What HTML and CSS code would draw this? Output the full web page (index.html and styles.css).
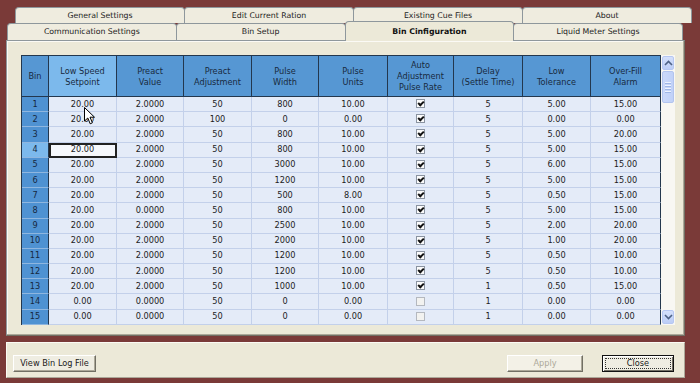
FILE: index.html
```html
<!DOCTYPE html>
<html>
<head>
<meta charset="utf-8">
<title>Bin Configuration</title>
<link rel="stylesheet" href="styles.css">
</head>
<body>
<div class="dialog">
  <div class="tabs">
    <div class="tabrow back">
      <div class="tab">General Settings</div>
      <div class="tab">Edit Current Ration</div>
      <div class="tab">Existing Cue Files</div>
      <div class="tab">About</div>
    </div>
    <div class="tabrow front">
      <div class="tab">Communication Settings</div>
      <div class="tab">Bin Setup</div>
      <div class="tab sel">Bin Cinfiguration</div>
      <div class="tab">Liquid Meter Settings</div>
    </div>
  </div>
  <div class="page">
    <div class="gridwrap">
      <table class="grid">
        <colgroup>
          <col class="c-bin"><col class="c68"><col class="c67"><col class="c68"><col class="c67"><col class="c69"><col class="c66"><col class="c69"><col class="c68"><col class="c70">
        </colgroup>
        <thead>
          <tr>
            <th>Bin</th>
            <th class="hsel">Low Speed<br>Setpoint</th>
            <th>Preact<br>Value</th>
            <th>Preact<br>Adjustment</th>
            <th>Pulse<br>Width</th>
            <th>Pulse<br>Units</th>
            <th>Auto<br>Adjustment<br>Pulse Rate</th>
            <th>Delay<br>(Settle Time)</th>
            <th>Low<br>Tolerance</th>
            <th>Over-Fill<br>Alarm</th>
          </tr>
        </thead>
        <tbody>
          <tr><td class="bin">1</td><td>20.00</td><td>2.0000</td><td>50</td><td>800</td><td>10.00</td><td><span class="cb on"></span></td><td>5</td><td>5.00</td><td>15.00</td></tr>
          <tr><td class="bin">2</td><td>20.00</td><td>2.0000</td><td>100</td><td>0</td><td>0.00</td><td><span class="cb on"></span></td><td>5</td><td>0.00</td><td>0.00</td></tr>
          <tr><td class="bin">3</td><td>20.00</td><td>2.0000</td><td>50</td><td>800</td><td>10.00</td><td><span class="cb on"></span></td><td>5</td><td>5.00</td><td>20.00</td></tr>
          <tr><td class="bin cur">4</td><td class="sel">20.00</td><td>2.0000</td><td>50</td><td>800</td><td>10.00</td><td><span class="cb on"></span></td><td>5</td><td>5.00</td><td>15.00</td></tr>
          <tr><td class="bin">5</td><td>20.00</td><td>2.0000</td><td>50</td><td>3000</td><td>10.00</td><td><span class="cb on"></span></td><td>5</td><td>6.00</td><td>15.00</td></tr>
          <tr><td class="bin">6</td><td>20.00</td><td>2.0000</td><td>50</td><td>1200</td><td>10.00</td><td><span class="cb on"></span></td><td>5</td><td>5.00</td><td>15.00</td></tr>
          <tr><td class="bin">7</td><td>20.00</td><td>2.0000</td><td>50</td><td>500</td><td>8.00</td><td><span class="cb on"></span></td><td>5</td><td>0.50</td><td>15.00</td></tr>
          <tr><td class="bin">8</td><td>20.00</td><td>0.0000</td><td>50</td><td>800</td><td>10.00</td><td><span class="cb on"></span></td><td>5</td><td>5.00</td><td>15.00</td></tr>
          <tr><td class="bin">9</td><td>20.00</td><td>2.0000</td><td>50</td><td>2500</td><td>10.00</td><td><span class="cb on"></span></td><td>5</td><td>2.00</td><td>20.00</td></tr>
          <tr><td class="bin">10</td><td>20.00</td><td>2.0000</td><td>50</td><td>2000</td><td>10.00</td><td><span class="cb on"></span></td><td>5</td><td>1.00</td><td>20.00</td></tr>
          <tr><td class="bin">11</td><td>20.00</td><td>2.0000</td><td>50</td><td>1200</td><td>10.00</td><td><span class="cb on"></span></td><td>5</td><td>0.50</td><td>10.00</td></tr>
          <tr><td class="bin">12</td><td>20.00</td><td>2.0000</td><td>50</td><td>1200</td><td>10.00</td><td><span class="cb on"></span></td><td>5</td><td>0.50</td><td>10.00</td></tr>
          <tr><td class="bin">13</td><td>20.00</td><td>2.0000</td><td>50</td><td>1000</td><td>10.00</td><td><span class="cb on"></span></td><td>1</td><td>0.50</td><td>15.00</td></tr>
          <tr><td class="bin">14</td><td>0.00</td><td>0.0000</td><td>50</td><td>0</td><td>0.00</td><td><span class="cb"></span></td><td>1</td><td>0.00</td><td>0.00</td></tr>
          <tr><td class="bin">15</td><td>0.00</td><td>0.0000</td><td>50</td><td>0</td><td>0.00</td><td><span class="cb"></span></td><td>1</td><td>0.00</td><td>0.00</td></tr>
        </tbody>
      </table>
      <div class="vscroll">
        <div class="sbtn">
          <svg width="9" height="6" viewBox="0 0 9 6"><path d="M1 5 L4.5 1.5 L8 5" fill="none" stroke="#4d6185" stroke-width="1.6"/></svg>
        </div>
        <div class="track">
          <div class="thumb"><i></i><i></i><i></i><i></i></div>
        </div>
        <div class="sbtn">
          <svg width="9" height="6" viewBox="0 0 9 6"><path d="M1 1 L4.5 4.5 L8 1" fill="none" stroke="#4d6185" stroke-width="1.6"/></svg>
        </div>
      </div>
      <svg class="cursor" width="12" height="18" viewBox="0 0 12 18"><path d="M0.5 0.5 L0.5 14 L3.8 11 L6.2 16.8 L8.4 15.8 L6 10.2 L10.5 10.2 Z" fill="#fff" stroke="#000" stroke-width="1" stroke-linejoin="round"/></svg>
    </div>
  </div>
  <div class="footer">
    <button class="btn log">View Bin Log File</button>
    <span class="spacer"></span>
    <button class="btn apply" disabled>Apply</button>
    <button class="btn close"><span class="focus">Close</span></button>
  </div>
</div>
</body>
</html>
```
FILE: styles.css
```css
* { box-sizing: border-box; }
html, body { margin: 0; padding: 0; }
body {
  width: 700px;
  height: 383px;
  overflow: hidden;
  background: #7a3a38;
  font-family: "DejaVu Sans", Verdana, sans-serif;
  font-size: 8.2px;
  color: #1a1a1a;
}
.dialog { padding: 7px 0 0 6px; }

/* tabs */
.tabs { height: 33px; font-size: 7.8px; }
.tabrow { display: flex; }
.tabrow.back { margin-left: 9px; width: 677px; height: 16px; }
.tabrow.front { margin-left: 1px; width: 676px; height: 17px; }
.tab {
  flex: 1;
  background: #efecdf;
  border: 1px solid #8e979c;
  border-bottom: none;
  border-radius: 4px 4px 0 0;
  text-align: center;
  color: #222;
  margin-left: -1px;
}
.tab:first-child { margin-left: 0; }
.back .tab { line-height: 15px; }
.front .tab { line-height: 16px; }
.tab.sel {
  position: relative;
  z-index: 2;
  margin-top: -2px;
  height: 20px;
  line-height: 19px;
  background: #ece9d8;
  font-weight: bold;
  color: #111;
}

/* page */
.page {
  width: 679px;
  height: 296px;
  background: #ece9d8;
  border: 1px solid #8f989c;
  border-right-color: #716f64;
  border-bottom-color: #716f64;
  box-shadow: inset -1px -1px 0 #aca899, inset 1px 1px 0 #fbfaf5;
  padding: 14px 0 0 14px;
}
.gridwrap {
  position: relative;
  display: flex;
  width: 654px;
  height: 270px;
}
.grid {
  table-layout: fixed;
  border-collapse: separate;
  border-spacing: 0;
  width: 639px;
  border-top: 1px solid #23374e;
  border-left: 1px solid #23374e;
  background: #e4ebf8;
}
.c-bin { width: 27px; }
.c66 { width: 66px; }
.c67 { width: 67px; }
.c68 { width: 68px; }
.c69 { width: 69px; }
.c70 { width: 70px; }
.grid thead tr { height: 41px; }
.grid tbody tr { height: 15.2px; }
.grid th {
  background: #5697d3;
  font-weight: normal;
  color: #182a40;
  line-height: 10.8px;
  padding: 1px 0 0;
  border-right: 1px solid #23374e;
  border-bottom: 1px solid #23374e;
  vertical-align: middle;
  text-align: center;
}
.grid th.hsel { background: #7cb9ec; }
.grid td {
  padding: 0;
  text-align: center;
  vertical-align: middle;
  line-height: 13px;
  border-right: 1px solid #c3d0ea;
  border-bottom: 1px solid #c3d0ea;
  color: #1c1c1c;
}
.grid td:last-child { border-right-color: #23374e; }
.grid td.bin {
  background: #4f92d2;
  color: #16283e;
  border-right: 1px solid #23374e;
  border-bottom: 1px solid #8fb6df;
}
.grid td.bin.cur { background: #7cb9ec; }
.grid td.sel {
  background: #f6f8fc;
  outline: 2px solid #222;
  outline-offset: -2px;
}
.cb {
  display: inline-block;
  position: relative;
  width: 9px;
  height: 9px;
  border: 1px solid #8a93a0;
  background: #fbfbfb;
  vertical-align: middle;
  margin-top: -1px;
}
.cb.on::after {
  content: "";
  position: absolute;
  left: 2px;
  top: 0px;
  width: 2px;
  height: 4px;
  border-right: 2px solid #111;
  border-bottom: 2px solid #111;
  transform: rotate(45deg);
}
.cb:not(.on) { border-color: #b4b8bf; background: #f2f2f0; }

/* scrollbar */
.vscroll {
  width: 15px;
  display: flex;
  flex-direction: column;
  background: #f8f7f3;
  padding: 1px;
}
.sbtn {
  height: 14px;
  border: 1px solid #b6c7f2;
  border-radius: 2px;
  background: linear-gradient(#d4e0fb, #bccdf6);
  display: flex;
  align-items: center;
  justify-content: center;
}
.track { flex: 1; padding-top: 1px; }
.thumb {
  height: 32px;
  border: 1px solid #b2c4ef;
  border-radius: 2px;
  background: linear-gradient(90deg, #cbd9fa, #c0d1f8);
  display: flex;
  flex-direction: column;
  align-items: center;
  justify-content: center;
  gap: 1px;
}
.thumb i {
  display: block;
  width: 6px;
  height: 1px;
  background: #eef3fe;
  box-shadow: 0 1px 0 #9fb6e6;
  margin-bottom: 1px;
}
.cursor {
  position: absolute;
  left: 63px;
  top: 52px;
}

/* footer */
.footer {
  margin-top: 6px;
  width: 679px;
  height: 36px;
  background: #ece9d8;
  border: 1px solid #fbfaf4;
  border-right-color: #aca899;
  border-bottom-color: #aca899;
  display: flex;
  align-items: flex-start;
  padding: 12px 10px 0 6px;
}
.spacer { flex: 1; }
.btn {
  height: 17px;
  padding: 0;
  margin: 0;
  font-family: "DejaVu Sans", Verdana, sans-serif;
  font-size: 8.2px;
  line-height: 13px;
  color: #1a1a1a;
  background: #efede2;
  border: 1px solid;
  border-color: #fff #716f64 #716f64 #fff;
  box-shadow: inset -1px -1px 0 #aca899;
  border-radius: 0;
}
.btn.log { width: 83px; }
.btn.apply { width: 76px; color: #aca899; margin-right: 19px; background: #f3f1e7; }
.btn.close {
  width: 72px;
  border: 1px solid #111;
  box-shadow: inset 1px 1px 0 #fff, inset -1px -1px 0 #716f64;
  padding: 2px;
  display: flex;
}
.focus {
  flex: 1;
  display: block;
  height: 11px;
  border: 1px dotted #333;
  line-height: 9px;
}
```
